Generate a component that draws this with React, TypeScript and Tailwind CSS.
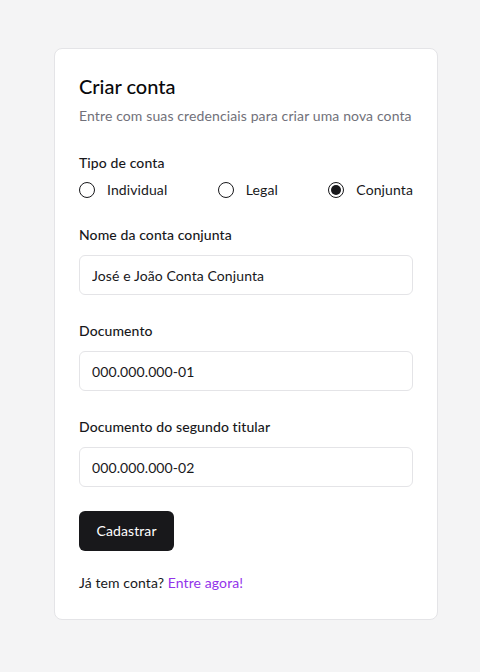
import React, { useState } from "react";

const font = { fontFamily: 'Lato, "Noto Sans", sans-serif' };

function Radio({ label, checked, onClick }: { label: string; checked: boolean; onClick: () => void }) {
  return (
    <label className="flex items-center gap-3 cursor-pointer" onClick={onClick}>
      <span className="flex h-4 w-4 items-center justify-center rounded-full border border-[#18181b]">
        {checked && <span className="h-2.5 w-2.5 rounded-full bg-[#18181b]" />}
      </span>
      <span className="text-sm leading-5 tracking-[0.1px] text-[#18181b]">{label}</span>
    </label>
  );
}

function Field({ label, value, className }: { label: string; value: string; className?: string }) {
  return (
    <div className={className}>
      <div className="text-sm font-medium leading-5 tracking-[0.1px] text-[#18181b]">{label}</div>
      <input
        readOnly
        value={value}
        className="mt-2.5 block h-10 w-full rounded-md border border-[#e4e4e7] bg-white px-3 text-sm tracking-[0.1px] text-[#18181b] outline-none"
        style={font}
      />
    </div>
  );
}

export default function App() {
  const [tipo, setTipo] = useState("Conjunta");
  return (
    <div className="min-h-screen bg-[#f4f4f5] pt-12" style={font}>
      <div className="ml-[54px] w-96 rounded-lg border border-[#e4e4e7] bg-white px-6 pt-[23px] pb-[26px]">
        <h1 className="text-xl leading-7 font-medium text-[#09090b]">Criar conta</h1>
        <p className="mt-1.5 text-sm leading-5 tracking-[0.12px] text-[#71717a]">
          Entre com suas credenciais para criar uma nova conta
        </p>
        <div className="mt-[27px] text-sm font-medium leading-5 tracking-[0.1px] text-[#18181b]">Tipo de conta</div>
        <div className="mt-[7px] flex items-center justify-between">
          {["Individual", "Legal", "Conjunta"].map((t) => (
            <Radio key={t} label={t} checked={tipo === t} onClick={() => setTipo(t)} />
          ))}
        </div>
        <Field className="mt-[25px]" label="Nome da conta conjunta" value="José e João Conta Conjunta" />
        <Field className="mt-[26px]" label="Documento" value="000.000.000-01" />
        <Field className="mt-[26px]" label="Documento do segundo titular" value="000.000.000-02" />
        <button className="mt-6 h-10 rounded-md bg-[#18181b] px-[17.5px] text-sm tracking-[0.1px] text-white">Cadastrar</button>
        <p className="mt-[22px] text-sm leading-5 tracking-[0.1px] text-[#18181b]">
          Já tem conta? <a className="text-[#9333ea]">Entre agora!</a>
        </p>
      </div>
    </div>
  );
}
